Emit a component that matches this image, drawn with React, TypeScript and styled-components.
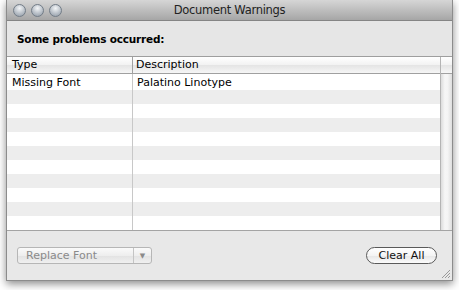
import React from 'react';
import styled, { createGlobalStyle } from 'styled-components';

const GlobalStyle = createGlobalStyle`
  html, body {
    margin: 0;
    padding: 0;
    background: #ffffff;
  }
  body {
    font-family: "DejaVu Sans", "Liberation Sans", sans-serif;
    font-size: 11px;
    color: #000;
  }
`;

const Page = styled.div`
  width: 459px;
  height: 290px;
  padding-left: 6px;
  box-sizing: border-box;
`;

const Window = styled.div`
  width: 447px;
  height: 281px;
  display: flex;
  flex-direction: column;
  background: #e8e8e8;
  border: 1px solid #8c8c8c;
  border-top: none;
  box-sizing: border-box;
  box-shadow: 0 3px 8px rgba(0, 0, 0, 0.45);
`;

const TitleBar = styled.div`
  height: 21px;
  display: flex;
  align-items: center;
  position: relative;
  background: linear-gradient(#d6d6d6, #a6a6a6);
  border-bottom: 1px solid #858585;
  box-sizing: border-box;
  padding-left: 6px;
  gap: 5px;
`;

const Light = styled.div`
  width: 13px;
  height: 13px;
  border-radius: 50%;
  box-sizing: border-box;
  border: 1px solid #737d88;
  background: radial-gradient(circle at 50% 30%, #f4f6f8 0%, #b9c0c8 55%, #8e98a3 100%);
`;

const Title = styled.div`
  position: absolute;
  inset: 0;
  display: flex;
  align-items: center;
  justify-content: center;
  font-size: 11.5px;
  letter-spacing: -0.3px;
  color: #222;
`;

const Message = styled.div`
  height: 35px;
  display: flex;
  align-items: center;
  padding-left: 10px;
  font-weight: bold;
  font-size: 10.5px;
  letter-spacing: -0.2px;
  background: #e6e6e6;
`;

const Table = styled.div`
  border-top: 1px solid #9e9e9e;
  border-bottom: 1px solid #a4a4a4;
  display: flex;
  background: #fff;
  height: 175px;
  box-sizing: border-box;
`;

const Grid = styled.div`
  flex: 1;
  display: flex;
  flex-direction: column;
  overflow: hidden;
`;

const HeaderRow = styled.div`
  height: 16px;
  display: flex;
  border-bottom: 1px solid #a0a0a0;
  background: linear-gradient(#ffffff 0%, #f2f2f2 50%, #e4e4e4 51%, #f6f6f6 100%);
  flex-shrink: 0;
`;

const HeaderCell = styled.div<{ $w?: number }>`
  ${(p) => (p.$w ? `width: ${p.$w}px;` : 'flex: 1;')}
  box-sizing: border-box;
  padding-left: ${(p) => (p.$w ? 5 : 3)}px;
  line-height: 16px;
  ${(p) => (p.$w ? 'border-right: 1px solid #a0a0a0;' : '')}
`;

const Row = styled.div<{ $h: number; $alt: boolean }>`
  height: ${(p) => p.$h}px;
  display: flex;
  background: ${(p) => (p.$alt ? '#ededed' : '#ffffff')};
  flex-shrink: 0;
`;

const Cell = styled.div<{ $w?: number }>`
  ${(p) => (p.$w ? `width: ${p.$w}px;` : 'flex: 1;')}
  box-sizing: border-box;
  padding-left: ${(p) => (p.$w ? 5 : 4)}px;
  display: flex;
  align-items: center;
  ${(p) => (p.$w ? 'border-right: 1px solid #c8c8c8;' : '')}
`;

const Scroller = styled.div`
  width: 11px;
  display: flex;
  flex-direction: column;
  border-left: 1px solid #b4b4b4;
`;

const ScrollCorner = styled.div`
  height: 16px;
  border-bottom: 1px solid #a0a0a0;
  background: linear-gradient(#ffffff 0%, #f2f2f2 50%, #e4e4e4 51%, #f6f6f6 100%);
`;

const ScrollTrack = styled.div`
  flex: 1;
  background: linear-gradient(90deg, #dcdcdc 0%, #f6f6f6 35%, #f4f4f4 60%, #dedede 100%);
`;

const Footer = styled.div`
  flex: 1;
  display: flex;
  align-items: flex-start;
  justify-content: space-between;
  padding: 16px 15px 0 10px;
  position: relative;
`;

const PopUp = styled.div`
  width: 135px;
  height: 17px;
  display: flex;
  border: 1px solid #b6b6b6;
  border-radius: 3px;
  box-sizing: border-box;
  background: linear-gradient(#fafafa 0%, #eeeeee 50%, #e2e2e2 51%, #f0f0f0 100%);
  color: #8a8a8a;
`;

const PopUpLabel = styled.div`
  flex: 1;
  display: flex;
  align-items: center;
  padding-left: 8px;
  border-right: 1px solid #c4c4c4;
`;

const PopUpArrow = styled.div`
  width: 17px;
  display: flex;
  align-items: center;
  justify-content: center;
  font-size: 7px;
  color: #8a8a8a;
`;

const PushButton = styled.div`
  width: 71px;
  height: 17px;
  display: flex;
  align-items: center;
  justify-content: center;
  border: 1px solid #5a5a5a;
  border-radius: 9px;
  box-sizing: border-box;
  background: linear-gradient(#ffffff 0%, #f4f4f4 50%, #e6e6e6 51%, #fbfbfb 100%);
  color: #111;
`;

const Grip = styled.svg`
  position: absolute;
  right: 1px;
  bottom: 1px;
`;

const rowHeights = [16, 14, 14, 14, 14, 14, 14, 14, 14, 14, 14];

export default function App() {
  return (
    <>
      <GlobalStyle />
      <Page>
        <Window>
          <TitleBar>
            <Light />
            <Light />
            <Light />
            <Title>Document Warnings</Title>
          </TitleBar>
          <Message>Some problems occurred:</Message>
          <Table>
            <Grid>
              <HeaderRow>
                <HeaderCell $w={126}>Type</HeaderCell>
                <HeaderCell>Description</HeaderCell>
              </HeaderRow>
              {rowHeights.map((h, i) => (
                <Row key={i} $h={h} $alt={i % 2 === 1}>
                  <Cell $w={126}>{i === 0 ? 'Missing Font' : ''}</Cell>
                  <Cell>{i === 0 ? 'Palatino Linotype' : ''}</Cell>
                </Row>
              ))}
            </Grid>
            <Scroller>
              <ScrollCorner />
              <ScrollTrack />
            </Scroller>
          </Table>
          <Footer>
            <PopUp>
              <PopUpLabel>Replace Font</PopUpLabel>
              <PopUpArrow>▼</PopUpArrow>
            </PopUp>
            <PushButton>Clear All</PushButton>
            <Grip width="11" height="11" viewBox="0 0 11 11">
              <path d="M10 2 L2 10 M10 5 L5 10 M10 8 L8 10" stroke="#9a9a9a" strokeWidth="1" />
            </Grip>
          </Footer>
        </Window>
      </Page>
    </>
  );
}
